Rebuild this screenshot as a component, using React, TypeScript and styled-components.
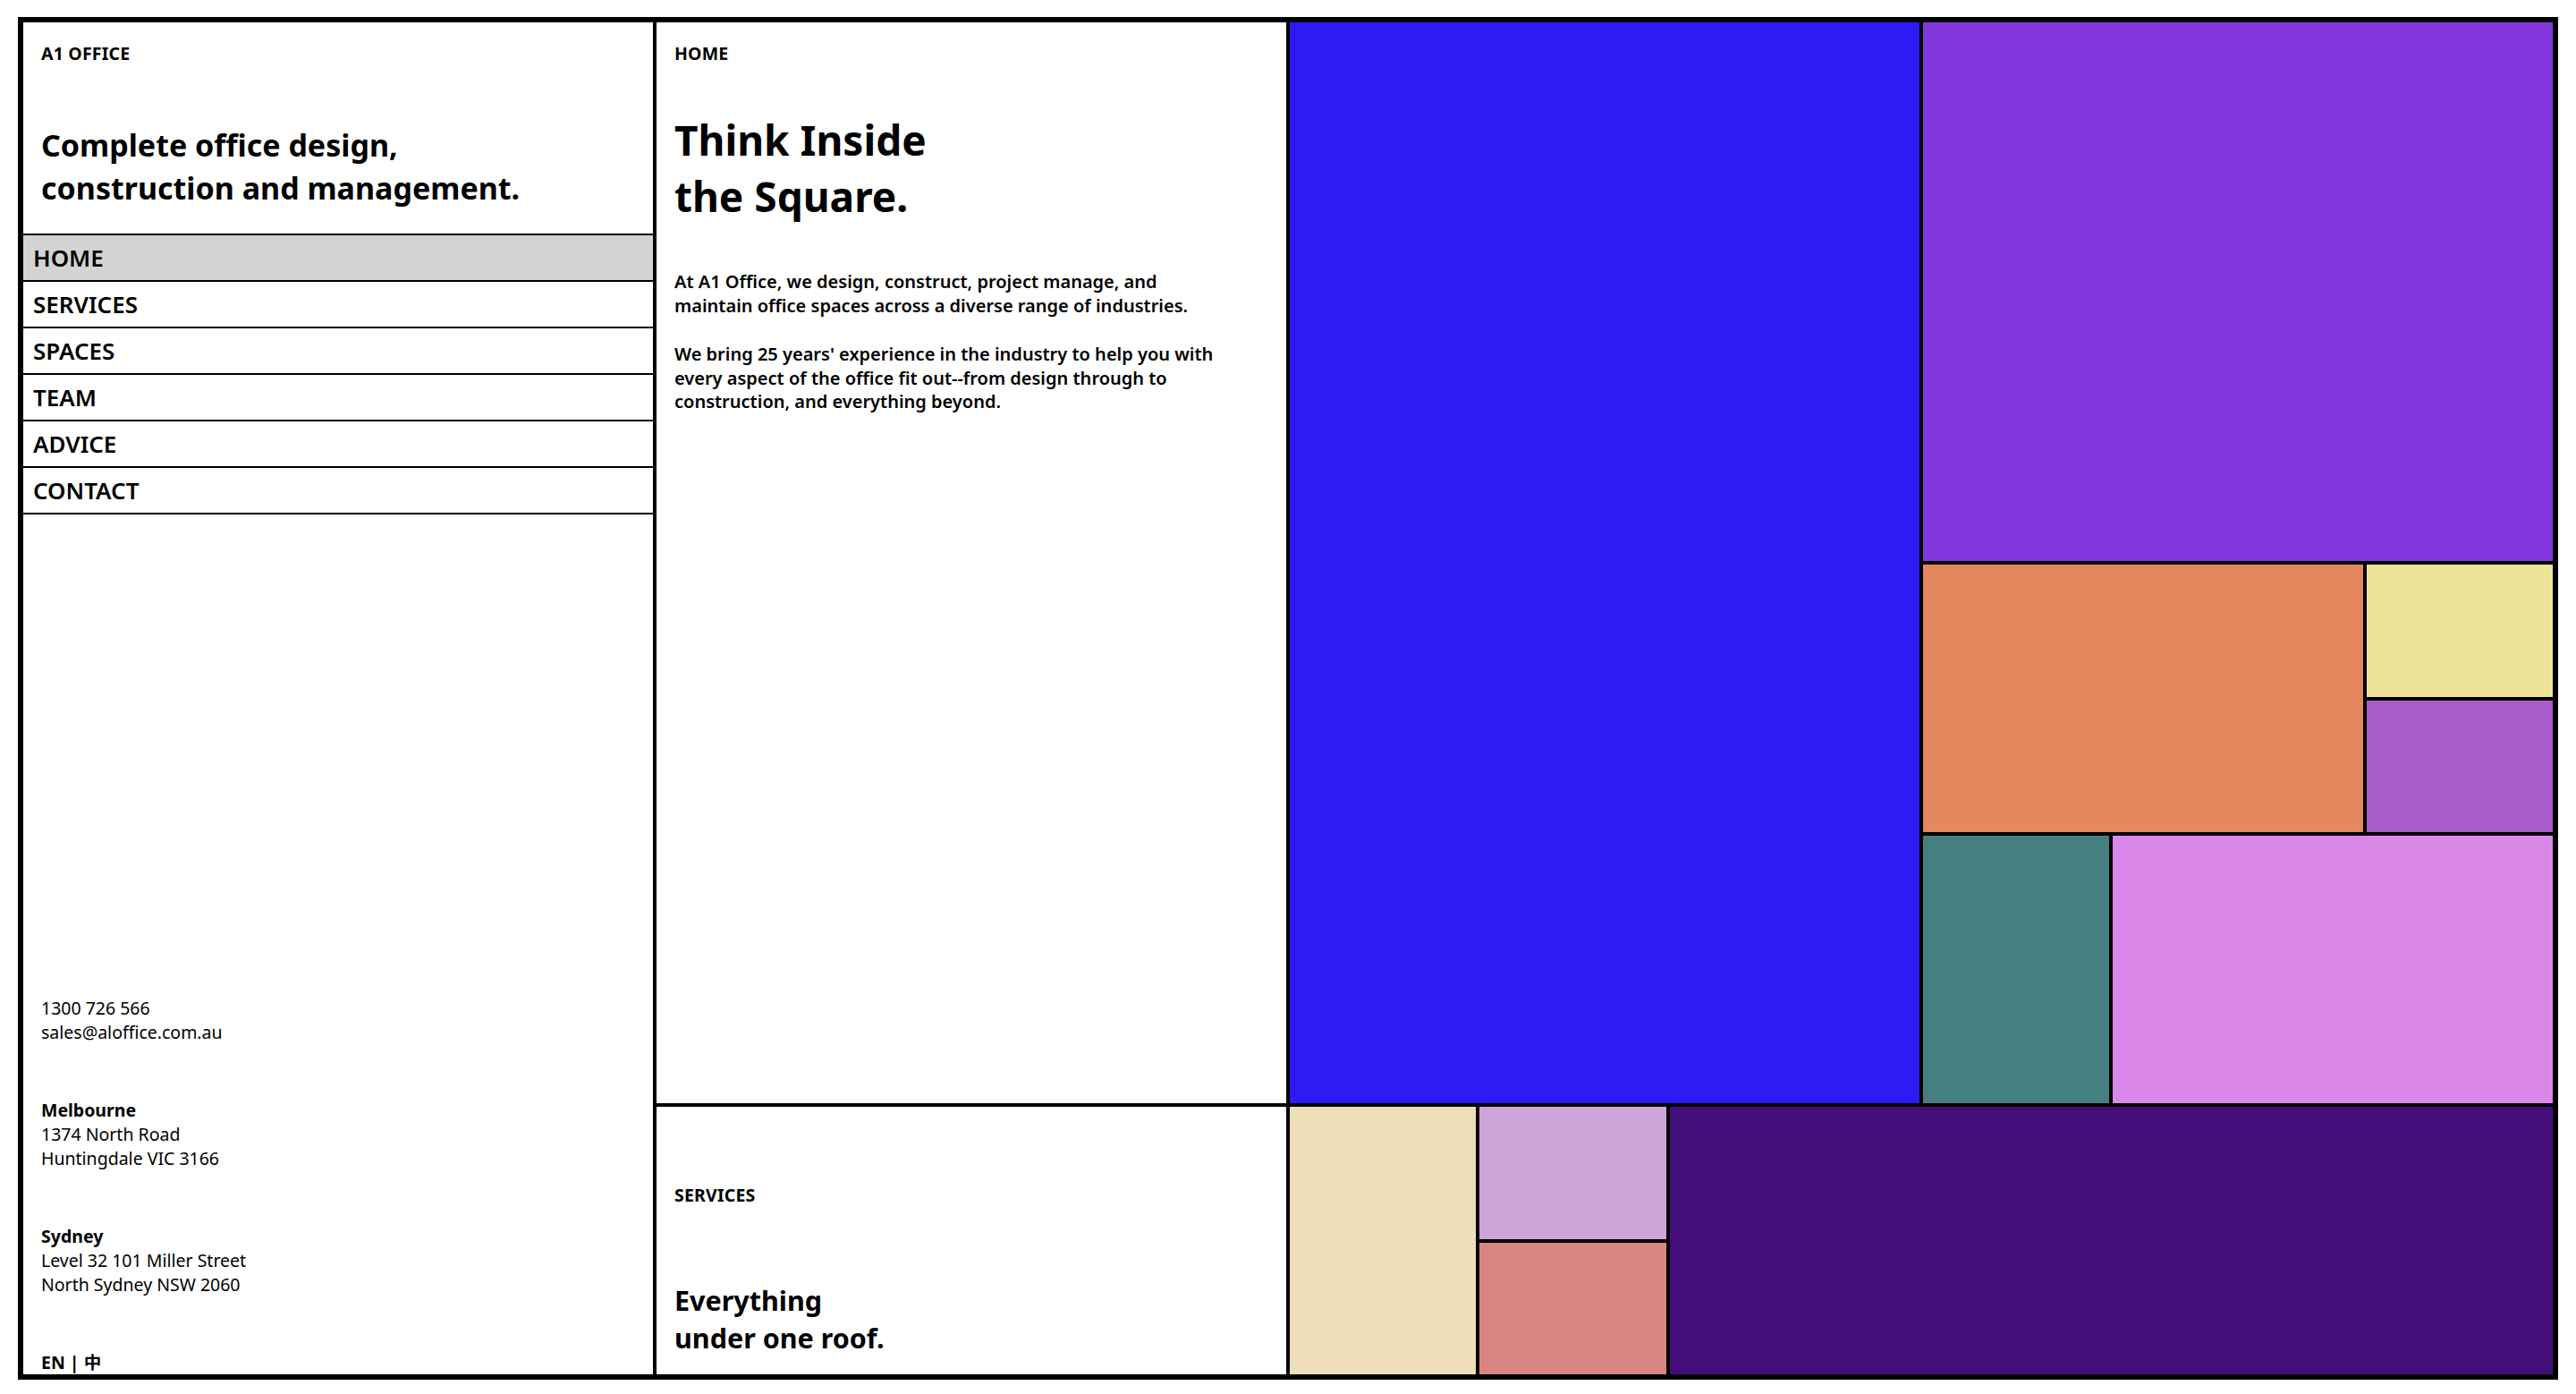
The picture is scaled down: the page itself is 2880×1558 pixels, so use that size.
import React from 'react';
import styled, { createGlobalStyle } from 'styled-components';

const GlobalStyle = createGlobalStyle`
  html, body {
    margin: 0;
    padding: 0;
    background: #ffffff;
  }
  body {
    font-family: 'Noto Sans', 'Noto Sans CJK SC', sans-serif;
    color: #000000;
  }
  * {
    box-sizing: border-box;
  }
`;

// the whole page is one black sheet, panels sit on it and the gaps become the rules
const Board = styled.main`
  margin: 19px 20px 0;
  height: 1523px;
  padding: 6px;
  background: #000000;
  display: grid;
  grid-template-columns: repeat(4, 1fr);
  grid-template-rows: repeat(5, 1fr);
  gap: 4px;
  grid-template-areas:
    'side home blue purple'
    'side home blue purple'
    'side home blue mid'
    'side home blue low'
    'side serv foot foot';
`;

const Sidebar = styled.aside`
  grid-area: side;
  background: #ffffff;
  display: flex;
  flex-direction: column;
  min-height: 0;
`;

const Intro = styled.header`
  padding: 22px 20px 27px;
`;

const Label = styled.div<{ $gap?: number }>`
  font-size: 19.5px;
  line-height: 26px;
  font-weight: 700;
  letter-spacing: 0.2px;
  margin-bottom: ${(p) => p.$gap ?? 0}px;
`;

const Tagline = styled.h1`
  margin: 65px 0 0;
  font-size: 34px;
  line-height: 48px;
  font-weight: 700;
`;

const Nav = styled.nav`
  border-top: 2px solid #000000;
`;

const NavItem = styled.a<{ $active?: boolean }>`
  display: block;
  height: 52px;
  padding-left: 11px;
  border-bottom: 2px solid #000000;
  background: ${(p) => (p.$active ? '#d3d3d3' : '#ffffff')};
  color: #000000;
  text-decoration: none;
  font-size: 26px;
  line-height: 50px;
  font-weight: 600;
`;

const Contact = styled.footer`
  margin-top: auto;
  padding: 0 20px;
  display: flex;
  flex-direction: column;
  gap: 60px;
  font-size: 19.5px;
  line-height: 27px;
`;

const Block = styled.div``;

const Line = styled.div<{ $bold?: boolean }>`
  font-weight: ${(p) => (p.$bold ? 700 : 400)};
`;

const Panel = styled.section<{ $area: string; $end?: boolean }>`
  grid-area: ${(p) => p.$area};
  background: #ffffff;
  padding: ${(p) => (p.$end ? '20px' : '22px 20px')};
  display: flex;
  flex-direction: column;
  justify-content: ${(p) => (p.$end ? 'flex-end' : 'flex-start')};
  min-height: 0;
`;

const Headline = styled.h2<{ $size: number; $lh: number; $top?: number }>`
  margin: ${(p) => p.$top ?? 0}px 0 0;
  font-size: ${(p) => p.$size}px;
  line-height: ${(p) => p.$lh}px;
  font-weight: 700;
`;

const Copy = styled.p<{ $top: number }>`
  margin: ${(p) => p.$top}px 0 0;
  font-size: 20px;
  line-height: 26.5px;
  font-weight: 600;
`;

const Strip = styled.div<{ $area: string }>`
  grid-area: ${(p) => p.$area};
  display: flex;
  gap: 4px;
  min-height: 0;
`;

const Stack = styled.div<{ $basis: number }>`
  flex: 0 0 ${(p) => p.$basis}px;
  display: flex;
  flex-direction: column;
  gap: 4px;
`;

const Tile = styled.div<{ $color: string; $area?: string; $basis?: number }>`
  background: ${(p) => p.$color};
  ${(p) => (p.$area ? `grid-area: ${p.$area};` : '')}
  flex: ${(p) => (p.$basis ? `0 0 ${p.$basis}px` : '1 1 0')};
`;

const navLinks = ['HOME', 'SERVICES', 'SPACES', 'TEAM', 'ADVICE', 'CONTACT'];

const App: React.FC = () => {
  return (
    <>
      <GlobalStyle />
      <Board>
        <Sidebar>
          <Intro>
            <Label>A1 OFFICE</Label>
            <Tagline>
              Complete office design,
              <br />
              construction and management.
            </Tagline>
          </Intro>
          <Nav>
            {navLinks.map((link, i) => (
              <NavItem key={link} href="#" $active={i === 0}>
                {link}
              </NavItem>
            ))}
          </Nav>
          <Contact>
            <Block>
              <Line>1300 726 566</Line>
              <Line>sales@aloffice.com.au</Line>
            </Block>
            <Block>
              <Line $bold>Melbourne</Line>
              <Line>1374 North Road</Line>
              <Line>Huntingdale VIC 3166</Line>
            </Block>
            <Block>
              <Line $bold>Sydney</Line>
              <Line>Level 32 101 Miller Street</Line>
              <Line>North Sydney NSW 2060</Line>
            </Block>
            <Line $bold>EN | 中</Line>
          </Contact>
        </Sidebar>

        <Panel $area="home">
          <Label>HOME</Label>
          <Headline $size={46} $lh={63} $top={52}>
            Think Inside
            <br />
            the Square.
          </Headline>
          <Copy $top={51}>
            At A1 Office, we design, construct, project manage, and
            <br />
            maintain office spaces across a diverse range of industries.
          </Copy>
          <Copy $top={28}>
            We bring 25 years' experience in the industry to help you with
            <br />
            every aspect of the office fit out--from design through to
            <br />
            construction, and everything beyond.
          </Copy>
        </Panel>

        <Panel $area="serv" $end>
          <Label $gap={83}>SERVICES</Label>
          <Headline $size={30.5} $lh={42}>
            Everything
            <br />
            under one roof.
          </Headline>
        </Panel>

        <Tile $area="blue" $color="#2d1af5" />
        <Tile $area="purple" $color="#8137db" />

        <Strip $area="mid">
          <Tile $color="#e6885e" />
          <Stack $basis={208}>
            <Tile $color="#ebe498" />
            <Tile $color="#aa5ccc" />
          </Stack>
        </Strip>

        <Strip $area="low">
          <Tile $color="#467f7f" $basis={208} />
          <Tile $color="#d987e8" />
        </Strip>

        <Strip $area="foot">
          <Tile $color="#eedeb9" $basis={208} />
          <Stack $basis={209}>
            <Tile $color="#cfa4d9" />
            <Tile $color="#d98683" />
          </Stack>
          <Tile $color="#430e7a" />
        </Strip>
      </Board>
    </>
  );
};

export default App;
